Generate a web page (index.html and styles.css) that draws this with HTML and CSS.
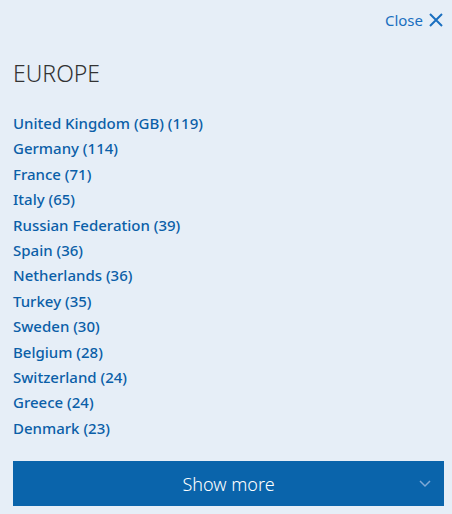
FILE: index.html
```html
<!DOCTYPE html>
<html lang="en">
<head>
    <meta charset="UTF-8">
    <title>Europe</title>
    <link rel="stylesheet" href="styles.css">
</head>
<body>
    <div class="panel">
        <div class="panel-top">
            <a class="close-link" href="#">Close
                <svg width="16" height="16" viewBox="0 0 16 16"><path d="M2 2 L14 14 M14 2 L2 14" stroke="#1a6fc0" stroke-width="2" fill="none"/></svg>
            </a>
        </div>
        <h2 class="region-title">EUROPE</h2>
        <ul class="country-list">
            <li><a href="#">United Kingdom (GB) (119)</a></li>
            <li><a href="#">Germany (114)</a></li>
            <li><a href="#">France (71)</a></li>
            <li><a href="#">Italy (65)</a></li>
            <li><a href="#">Russian Federation (39)</a></li>
            <li><a href="#">Spain (36)</a></li>
            <li><a href="#">Netherlands (36)</a></li>
            <li><a href="#">Turkey (35)</a></li>
            <li><a href="#">Sweden (30)</a></li>
            <li><a href="#">Belgium (28)</a></li>
            <li><a href="#">Switzerland (24)</a></li>
            <li><a href="#">Greece (24)</a></li>
            <li><a href="#">Denmark (23)</a></li>
        </ul>
        <button class="more-button">Show more
            <svg class="chevron" width="12" height="8" viewBox="0 0 12 8"><path d="M1 1 L6 6 L11 1" stroke="#7fa9d6" stroke-width="1.5" fill="none"/></svg>
        </button>
    </div>
</body>
</html>
```
FILE: styles.css
```css
body {
    margin: 0;
    background: #e6eef7;
    font-family: "Noto Sans", sans-serif;
}

.panel {
    padding: 10px 8px 8px 13px;
}

.panel-top {
    display: flex;
    justify-content: flex-end;
}

.close-link {
    display: flex;
    align-items: center;
    gap: 5px;
    color: #1a6fc0;
    text-decoration: none;
    font-size: 15px;
}

.region-title {
    margin: 27px 0 0 0;
    font-size: 23px;
    font-weight: 300;
    color: #333;
}

.country-list {
    list-style: none;
    margin: 22px 0 0 0;
    padding: 0;
}

.country-list li {
    height: 25.4px;
    line-height: 25.4px;
}

.country-list a {
    color: #0b5fa8;
    text-decoration: none;
    font-size: 15px;
    font-weight: 500;
}

.more-button {
    position: relative;
    width: 100%;
    height: 45px;
    margin-top: 20px;
    border: none;
    background: #0a64ab;
    color: white;
    font-family: "Noto Sans", sans-serif;
    font-size: 18px;
    font-weight: 300;
}

.chevron {
    position: absolute;
    right: 13px;
    top: 19px;
}
```
